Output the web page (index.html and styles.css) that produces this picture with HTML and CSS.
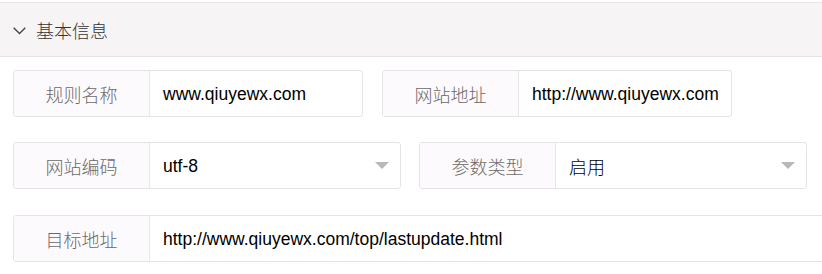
FILE: index.html
```html
<!DOCTYPE html>
<html lang="zh-CN">
<head>
<meta charset="utf-8">
<title>基本信息</title>
<link rel="stylesheet" href="styles.css">
</head>
<body>
<div class="panel">
  <div class="panel-head">
    <svg class="chev" width="13" height="8" viewBox="0 0 13 8"><path d="M0.7 0.7 L6.5 6.5 L12.3 0.7" fill="none" stroke="#444" stroke-width="1.3"/></svg>
    <span class="panel-title">基本信息</span>
  </div>
  <div class="panel-body">
    <div class="row">
      <div class="field w350">
        <div class="label">规则名称</div>
        <div class="value">www.qiuyewx.com</div>
      </div>
      <div class="field w350 gap19">
        <div class="label">网站地址</div>
        <div class="value">http://www.qiuyewx.com</div>
      </div>
    </div>
    <div class="row r2">
      <div class="field w388 select">
        <div class="label">网站编码</div>
        <div class="value">utf-8</div>
        <span class="caret"></span>
      </div>
      <div class="field w388 gap18 select">
        <div class="label">参数类型</div>
        <div class="value cjk">启用</div>
        <span class="caret"></span>
      </div>
    </div>
    <div class="row r3">
      <div class="field wfull">
        <div class="label">目标地址</div>
        <div class="value">http://www.qiuyewx.com/top/lastupdate.html</div>
      </div>
    </div>
  </div>
</div>
</body>
</html>
```
FILE: styles.css
```css
html, body {
  margin: 0;
  padding: 0;
  background: #ffffff;
  overflow: hidden;
}
body {
  font-family: "Noto Sans CJK SC", "Liberation Sans", sans-serif;
}
.panel {
  margin-top: 2px;
}
.panel-head {
  height: 53px;
  background: #f7f4f6;
  border-top: 1px solid #e8e6e8;
  border-bottom: 1px solid #e6e4e6;
  display: flex;
  align-items: center;
  padding-left: 13px;
}
.chev {
  display: block;
  margin-right: 10px;
  margin-top: 2px;
}
.panel-title {
  font-size: 18px;
  font-weight: 300;
  color: #333333;
  line-height: 1;
}
.panel-body {
  padding: 13px 0 0 13px;
  overflow: hidden;
}
.row {
  display: flex;
}
.r2 {
  margin-top: 25px;
}
.r3 {
  margin-top: 26px;
}
.field {
  box-sizing: border-box;
  height: 47px;
  border: 1px solid #e4e4e4;
  border-radius: 3px;
  display: flex;
  align-items: center;
  position: relative;
  flex: none;
  overflow: hidden;
}
.w350 { width: 350px; }
.w388 { width: 388px; }
.wfull { width: 830px; }
.gap19 { margin-left: 19px; }
.gap18 { margin-left: 18px; }
.label {
  box-sizing: border-box;
  width: 136px;
  height: 100%;
  flex: none;
  background: #fdfafd;
  border-right: 1px solid #e8e6e8;
  display: flex;
  align-items: center;
  justify-content: center;
  font-size: 18px;
  font-weight: 300;
  color: #6a6a6a;
}
.value {
  padding-left: 13px;
  padding-top: 2px;
  font-family: "Liberation Sans", "Noto Sans CJK SC", sans-serif;
  font-size: 17.5px;
  color: #000000;
  white-space: nowrap;
}
.value.cjk {
  font-family: "Noto Sans CJK SC", sans-serif;
  font-size: 18px;
  font-weight: 300;
  padding-top: 0;
}
.caret {
  position: absolute;
  right: 11px;
  top: 19px;
  width: 0;
  height: 0;
  border-left: 7px solid transparent;
  border-right: 7px solid transparent;
  border-top: 7px solid #b8b8b8;
}
```
